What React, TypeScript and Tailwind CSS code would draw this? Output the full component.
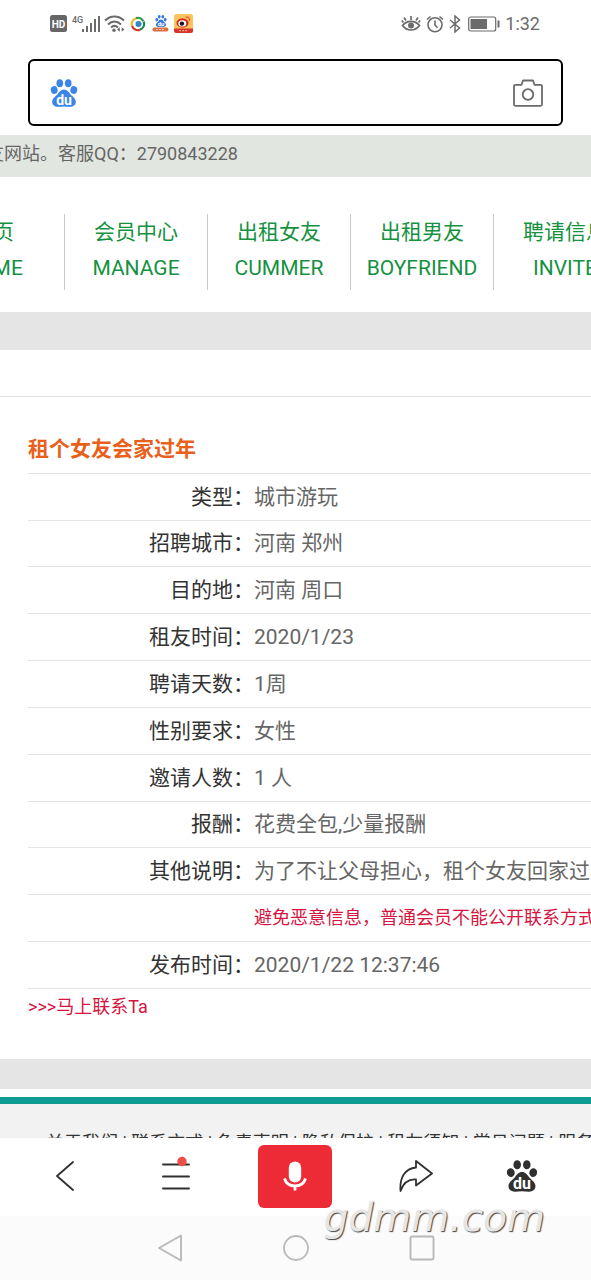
interface NavItem {
  zh: string;
  en: string;
}

interface DetailRow {
  label: string;
  value: string;
  isNotice?: boolean;
}

const navItems: NavItem[] = [
  { zh: "首页", en: "HOME" },
  { zh: "会员中心", en: "MANAGE" },
  { zh: "出租女友", en: "CUMMER" },
  { zh: "出租男友", en: "BOYFRIEND" },
  { zh: "聘请信息", en: "INVITE" },
];

const rows: DetailRow[] = [
  { label: "类型：", value: "城市游玩" },
  { label: "招聘城市：", value: "河南 郑州" },
  { label: "目的地：", value: "河南 周口" },
  { label: "租友时间：", value: "2020/1/23" },
  { label: "聘请天数：", value: "1周" },
  { label: "性别要求：", value: "女性" },
  { label: "邀请人数：", value: "1 人" },
  { label: "报酬：", value: "花费全包,少量报酬" },
  { label: "其他说明：", value: "为了不让父母担心，租个女友回家过年" },
  { label: "", value: "避免恶意信息，普通会员不能公开联系方式", isNotice: true },
  { label: "发布时间：", value: "2020/1/22 12:37:46" },
];

const footerLinks = [
  "关于我们",
  "联系方式",
  "免责声明",
  "隐私保护",
  "租友须知",
  "常见问题",
  "服务条款",
];

function PawLogo({ className }: { className: string }) {
  return (
    <svg viewBox="0 0 28 28" className={className} fill="currentColor" aria-hidden="true">
      <ellipse cx="9.800" cy="4.200" rx="3.300" ry="4" />
      <ellipse cx="18.200" cy="4.200" rx="3.300" ry="4" />
      <ellipse cx="4.200" cy="11" rx="3.400" ry="3.900" transform="rotate(-12 4.200 11)" />
      <ellipse cx="23.800" cy="11" rx="3.400" ry="3.900" transform="rotate(12 23.800 11)" />
      <path d="M14 10.600c3 0 4.600 2.400 6.200 4.400 2 2.400 5.600 4.200 5.600 7.800 0 3.200-2.600 5-5.600 5-2.200 0-4-.4-6.200-.4s-4 .4-6.200.4c-3 0-5.600-1.800-5.600-5 0-3.600 3.600-5.400 5.600-7.800 1.600-2 3.200-4.400 6.200-4.400z" />
      <text
        x="14"
        y="25.500"
        textAnchor="middle"
        fill="#fff"
        className="font-['Roboto',sans-serif] text-[14px] font-bold"
      >
        du
      </text>
    </svg>
  );
}

function StatusBar() {
  return (
    <div className="flex h-[47px] shrink-0 items-center justify-between pr-[51px] pl-[50px] text-[#6b6b6b]">
      <div className="flex items-center">
        <svg viewBox="0 0 17 17" className="size-[17px]" aria-hidden="true">
          <rect width="17" height="17" rx="2.500" fill="#666" />
          <text
            x="8.500"
            y="12.500"
            textAnchor="middle"
            fill="#fff"
            className="font-['Roboto',sans-serif] text-[10px] font-bold"
          >
            HD
          </text>
        </svg>
        <svg viewBox="0 0 29 19" className="ml-1 h-[19px] w-[29px]" fill="currentColor" aria-hidden="true">
          <text x="1" y="9" className="font-['Roboto',sans-serif] text-[9px] font-medium">
            4G
          </text>
          <rect x="11" y="15" width="2" height="3" />
          <rect x="15" y="12" width="2" height="6" />
          <rect x="19" y="9" width="2" height="9" />
          <rect x="23" y="5" width="2" height="13" />
          <rect x="27" y="2" width="2" height="16" />
        </svg>
        <svg viewBox="0 0 21 18" className="ml-1 h-[18px] w-[21px]" fill="none" stroke="currentColor" aria-hidden="true">
          <path d="M1 5.500c5.500-5.500 13.500-5.500 19 0M4 9.500c4-4 9-4 13 0M7 12.500c2.400-2.200 4.600-2.200 7 0" strokeWidth="2" />
          <circle cx="10" cy="15.300" r="1.700" fill="currentColor" stroke="none" />
          <path d="M13 14.500l2.800-2.200v4.400zM20.500 14.500l-2.800-2.200v4.400z" fill="currentColor" stroke="none" />
        </svg>
        <svg viewBox="0 0 16 16" className="ml-[5px] size-4" fill="none" strokeWidth="2.200" aria-hidden="true">
          <path d="M2.300 10.500A6 6 0 0 1 6 2.300" stroke="#e8b92e" />
          <path d="M6 2.100A6 6 0 0 1 13.300 5.200" stroke="#2c9a46" />
          <path d="M13.700 5.500A6 6 0 0 1 10 13.600" stroke="#1f8a4b" />
          <path d="M10 13.800A6 6 0 0 1 2.100 10" stroke="#d8332b" />
          <circle cx="8.500" cy="8" r="3" fill="#2c86c8" />
        </svg>
        <span className="ml-[6px] flex w-[17px] flex-col items-center">
          <PawLogo className="size-3 text-[#3378d8]" />
          <svg viewBox="0 0 17 5" className="h-[5px] w-[17px]" aria-hidden="true">
            <rect x="0.500" y="0.500" width="16" height="4" rx="2" fill="#dd6d3e" />
            <path d="M4 2.500h9" stroke="#f5cdb5" strokeDasharray="2 1" />
          </svg>
        </span>
        <svg viewBox="0 0 19 19" className="ml-[5px] size-[19px]" aria-hidden="true">
          <rect width="19" height="19" rx="2.500" fill="#fbc45c" />
          <path d="M0 14.500h19v2a2.500 2.500 0 0 1-2.500 2.500h-14a2.500 2.500 0 0 1-2.500-2.500z" fill="#d6362b" />
          <path d="M5 16.700h9" stroke="#f7b9a0" strokeDasharray="2 1" />
          <ellipse cx="8.500" cy="9" rx="6" ry="4.600" fill="#d3251f" />
          <ellipse cx="8.300" cy="9.400" rx="4" ry="3.200" fill="#fff" />
          <circle cx="7.900" cy="9.600" r="2.200" fill="#181818" />
          <path d="M11.500 3.200c2.600-.7 4.600 1.200 4 3.800" fill="none" stroke="#e5582b" strokeWidth="1.300" />
        </svg>
      </div>
      <div className="flex items-center">
        <svg viewBox="0 0 20 18" className="h-[18px] w-5" fill="none" stroke="currentColor" strokeWidth="1.700" aria-hidden="true">
          <path d="M1.500 10.500c4.500-5.500 12.500-5.500 17 0-4.500 6-12.500 6-17 0zM10 5V1M5 5.500L3 2.500M15 5.500l2-3M2.500 7.500L.8 5.500M17.500 7.500l1.700-2" />
          <circle cx="10" cy="10.500" r="3" fill="currentColor" stroke="none" />
        </svg>
        <svg viewBox="0 0 18 18" className="ml-[5px] size-[18px]" fill="none" stroke="currentColor" strokeWidth="1.600" aria-hidden="true">
          <circle cx="9" cy="9.800" r="7" />
          <path d="M9 5.500v4.500l2.500 2.800M1 4.500L4.500 1.500M17 4.500l-3.500-3" />
        </svg>
        <svg viewBox="0 0 12 18" className="ml-[5px] h-[18px] w-3" fill="none" stroke="currentColor" strokeWidth="1.500" aria-hidden="true">
          <path d="M1 5l9.500 8L6 17V1l4.500 4L1 13" />
        </svg>
        <svg viewBox="0 0 32 16" className="ml-[7px] h-4 w-8" fill="none" stroke="currentColor" aria-hidden="true">
          <rect x="0.700" y="1" width="27" height="14" rx="2" strokeWidth="1.200" />
          <rect x="2.500" y="3" width="16.500" height="10" fill="currentColor" stroke="none" />
          <path d="M30.500 4.500v7" strokeWidth="2" />
        </svg>
        <span className="ml-[5px] text-[18px] leading-6">1:32</span>
      </div>
    </div>
  );
}

function SearchBar() {
  return (
    <form className="mx-7 mt-3 mb-[9px] flex h-[67px] shrink-0 items-center rounded-md border-2 border-black pr-[18px] pl-5">
      <PawLogo className="size-7 text-[#3b84ea]" />
      <input
        type="search"
        aria-label="搜索"
        className="h-full min-w-0 flex-1 bg-transparent px-3 text-[21px] text-[#333] outline-none"
      />
      <button type="button" aria-label="拍照搜索" className="text-[#6a6a6a]">
        <svg viewBox="0 0 30 28" className="h-7 w-[30px]" fill="none" stroke="currentColor" strokeWidth="1.800" strokeLinejoin="round">
          <path d="M2.500 5.800H8.500l1.500-4.300h10l1.500 4.300h6a1.500 1.500 0 0 1 1.500 1.500v18a1.500 1.500 0 0 1-1.500 1.500h-25A1.500 1.500 0 0 1 1 25.300v-18a1.500 1.500 0 0 1 1.500-1.500z" />
          <circle cx="15" cy="15.500" r="5.300" />
        </svg>
      </button>
    </form>
  );
}

function SiteNav() {
  return (
    <nav className="overflow-hidden pt-[37px] pb-[22px]">
      {/* The bar is scrolled sideways, so the first item is partly out of view */}
      <ul className="-ml-[78px] flex">
        {navItems.map((item) => (
          <li key={item.en} className="w-[143px] shrink-0 border-r border-[#c9c9c9] text-center">
            <a href="#" className="block pb-1 text-[21px] leading-[36px] text-[#159140]">
              {item.zh}
              <span className="block">{item.en}</span>
            </a>
          </li>
        ))}
      </ul>
    </nav>
  );
}

function Details() {
  return (
    <section className="pl-7">
      <h2 className="border-b border-[#e4e4e4] pt-[37px] pb-[9px] text-[21px] leading-[30px] font-bold text-[#e8611c]">
        租个女友会家过年
      </h2>
      <table className="h-[515px] w-full border-collapse whitespace-nowrap">
        <tbody>
          {rows.map((row) => (
            <tr key={row.value} className="border-b border-[#e4e4e4]">
              <th scope="row" className="w-[226px] min-w-[226px] p-0 text-right text-[21px] leading-[30px] font-normal text-[#333]">
                {row.label}
              </th>
              <td
                className={
                  row.isNotice
                    ? "p-0 text-[18px] leading-[30px] text-[#d5143f]"
                    : "p-0 text-[21px] leading-[30px] text-[#666]"
                }
              >
                {row.value}
              </td>
            </tr>
          ))}
        </tbody>
      </table>
      <a href="#" className="block pt-1 pb-[38px] text-[18px] leading-7 text-[#d5143f]">
        &gt;&gt;&gt;马上联系Ta
      </a>
    </section>
  );
}

function Toolbar() {
  return (
    <div className="flex h-[78px] shrink-0 items-center justify-between bg-white pr-[47px] pb-[2px] pl-9 text-[#303030]">
      <button type="button" aria-label="返回" className="flex w-[58px] justify-center">
        <svg viewBox="0 0 20 30" className="h-[30px] w-5" fill="none" stroke="currentColor" strokeWidth="1.800" strokeLinecap="round" strokeLinejoin="round">
          <path d="M18 1L2 15l16 14" />
        </svg>
      </button>
      <button type="button" aria-label="菜单" className="w-[30px]">
        <svg viewBox="0 0 30 40" className="h-10 w-[30px]" fill="none" stroke="currentColor" strokeWidth="1.900" strokeLinecap="round">
          <path d="M2 8.500h26M2 20.500h26M2 32.500h26" />
          <circle cx="21" cy="5.500" r="4.700" fill="#ee4d48" stroke="none" />
        </svg>
      </button>
      <button type="button" aria-label="语音搜索" className="flex h-[63px] w-[74px] items-center justify-center rounded-md bg-[#ed2b37]">
        <svg viewBox="0 0 24 30" className="h-[30px] w-6" fill="none" stroke="#fff">
          <rect x="5.800" y="0.500" width="12.400" height="21" rx="6.200" fill="#fff" stroke="none" />
          <path d="M1.500 17.500c1.500 5 5.500 7.500 10.500 7.500s9-2.500 10.500-7.500M12 25v4.500" strokeWidth="2.800" />
        </svg>
      </button>
      <button type="button" aria-label="分享" className="w-[34px]">
        <svg viewBox="0 0 34 34" className="size-[34px]" fill="none" stroke="currentColor" strokeWidth="1.800" strokeLinejoin="round">
          <path d="M17 2L33 14.500 17 26.500v-6C10 20 4.500 23.500 1.500 32 .5 18.500 6 9.500 17 8.500z" />
        </svg>
      </button>
      <button type="button" aria-label="百度首页" className="flex w-11 justify-center">
        <PawLogo className="size-8" />
      </button>
    </div>
  );
}

function SystemNav() {
  return (
    <div className="flex h-16 shrink-0 items-center justify-center gap-[100px] bg-[#fbfbfb] text-[#b9b9b9]">
      <button type="button" aria-label="系统返回">
        <svg viewBox="0 0 26 28" className="h-7 w-[26px]" fill="none" stroke="currentColor" strokeWidth="1.900" strokeLinejoin="round">
          <path d="M24 1.500v25L2 14z" />
        </svg>
      </button>
      <button type="button" aria-label="主屏幕">
        <svg viewBox="0 0 26 26" className="size-[26px]" fill="none" stroke="currentColor" strokeWidth="1.800">
          <circle cx="13" cy="13" r="12" />
        </svg>
      </button>
      <button type="button" aria-label="最近任务">
        <svg viewBox="0 0 26 26" className="size-[26px]" fill="none" stroke="currentColor" strokeWidth="1.900">
          <rect x="1.500" y="1.500" width="23" height="23" rx="1.500" />
        </svg>
      </button>
    </div>
  );
}

export default function App() {
  return (
    <div
      lang="zh-CN"
      className="relative flex h-screen flex-col overflow-hidden bg-white font-['Roboto','Noto_Sans_CJK_SC',sans-serif]"
    >
      <StatusBar />
      <SearchBar />

      <main className="min-h-0 flex-1 overflow-hidden">
        <div className="overflow-hidden bg-[#e1e7e0] pt-1 pb-2">
          <p className="-ml-8 text-[18px] leading-[30px] whitespace-nowrap text-[#666]">
            交友网站。客服QQ：2790843228
          </p>
        </div>
        <SiteNav />
        <div className="h-[38px] bg-[#e5e5e5]" />
        <div className="h-[47px] border-b border-[#e0e0e0]" />
        <Details />
        <div className="h-[30px] bg-[#e5e5e5]" />
        <footer className="mt-2 border-t-[7px] border-[#0f9a93] bg-[#f2f2f2] pt-6 pl-[46px]">
          <p className="text-[18px] leading-[30px] whitespace-nowrap text-[#333]">
            {footerLinks.map((link, index) => (
              <span key={link}>
                {index > 0 && " | "}
                <a href="#">{link}</a>
              </span>
            ))}
          </p>
        </footer>
      </main>

      <Toolbar />
      <SystemNav />

      <span className="pointer-events-none absolute right-[46px] bottom-[38px] font-['DejaVu_Sans',sans-serif] text-[39px] leading-[48px] text-[#e6e6e6] italic [text-shadow:1px_1px_1px_#444]">
        gdmm.com
      </span>
    </div>
  );
}
